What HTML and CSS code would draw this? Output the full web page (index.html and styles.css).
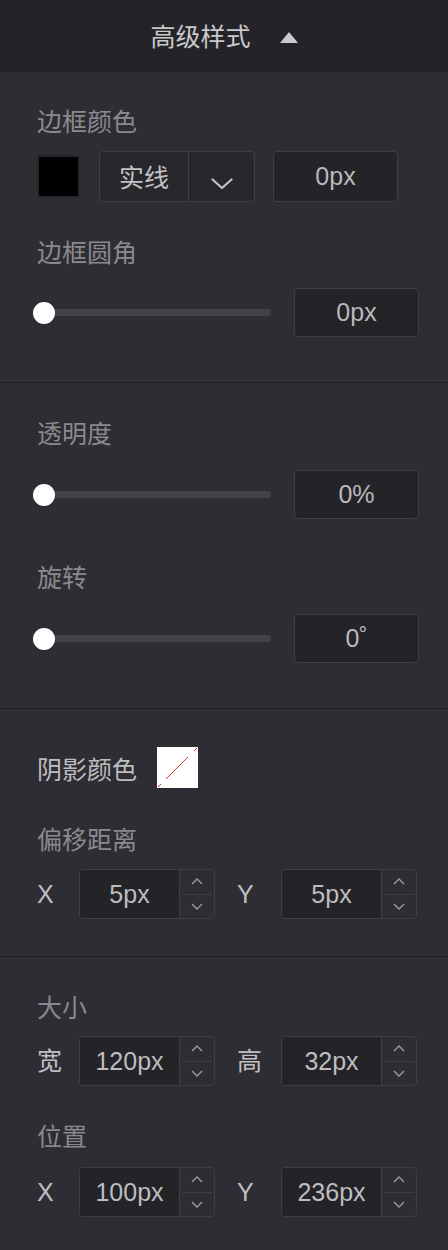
FILE: index.html
```html
<!DOCTYPE html>
<html lang="zh">
<head>
<meta charset="utf-8">
<title>高级样式</title>
<link rel="stylesheet" href="styles.css">
</head>
<body>
<div class="panel">
  <header class="head">
    <span class="title">高级样式</span>
    <span class="tri"></span>
  </header>

  <section class="sec sec1">
    <div class="label">边框颜色</div>
    <div class="row border-row">
      <div class="swatch swatch-black"></div>
      <div class="select">
        <span class="sel-text">实线</span>
        <span class="sel-arrow">
          <svg width="22" height="12" viewBox="0 0 22 12"><polyline points="1.5,1.5 11,10 20.5,1.5" fill="none" stroke="#c4c4c7" stroke-width="2.2" stroke-linecap="round" stroke-linejoin="round"/></svg>
        </span>
      </div>
      <div class="box box-border">0px</div>
    </div>
    <div class="label gap-label">边框圆角</div>
    <div class="row slider-row">
      <div class="slider"><div class="track"></div><div class="thumb"></div></div>
      <div class="box">0px</div>
    </div>
  </section>

  <section class="sec sec2">
    <div class="label">透明度</div>
    <div class="row slider-row">
      <div class="slider"><div class="track"></div><div class="thumb"></div></div>
      <div class="box">0%</div>
    </div>
    <div class="label gap-label2">旋转</div>
    <div class="row slider-row">
      <div class="slider"><div class="track"></div><div class="thumb"></div></div>
      <div class="box">0˚</div>
    </div>
  </section>

  <section class="sec sec3">
    <div class="row shadow-row">
      <span class="label-bright">阴影颜色</span>
      <div class="swatch-none">
        <svg width="41" height="41" viewBox="0 0 41 41">
          <line x1="1" y1="40" x2="4" y2="37" stroke="#e0322b" stroke-width="1"/>
          <line x1="9" y1="32" x2="31" y2="10" stroke="#e0322b" stroke-width="1"/>
          <line x1="37" y1="4" x2="40" y2="1" stroke="#e0322b" stroke-width="1"/>
        </svg>
      </div>
    </div>
    <div class="label gap-label3">偏移距离</div>
    <div class="pair-row">
      <span class="pl">X</span>
      <div class="spin"><span class="num">5px</span><span class="arrows"><span class="ar"><svg width="12" height="7" viewBox="0 0 12 7"><polyline points="1,6 6,1 11,6" fill="none" stroke="#9c9ca0" stroke-width="1.4"/></svg></span><span class="ar ar-d"><svg width="12" height="7" viewBox="0 0 12 7"><polyline points="1,1 6,6 11,1" fill="none" stroke="#9c9ca0" stroke-width="1.4"/></svg></span></span></div>
      <span class="pl pl2">Y</span>
      <div class="spin"><span class="num">5px</span><span class="arrows"><span class="ar"><svg width="12" height="7" viewBox="0 0 12 7"><polyline points="1,6 6,1 11,6" fill="none" stroke="#9c9ca0" stroke-width="1.4"/></svg></span><span class="ar ar-d"><svg width="12" height="7" viewBox="0 0 12 7"><polyline points="1,1 6,6 11,1" fill="none" stroke="#9c9ca0" stroke-width="1.4"/></svg></span></span></div>
    </div>
  </section>

  <section class="sec sec4">
    <div class="label">大小</div>
    <div class="pair-row pr-size">
      <span class="pl">宽</span>
      <div class="spin"><span class="num">120px</span><span class="arrows"><span class="ar"><svg width="12" height="7" viewBox="0 0 12 7"><polyline points="1,6 6,1 11,6" fill="none" stroke="#9c9ca0" stroke-width="1.4"/></svg></span><span class="ar ar-d"><svg width="12" height="7" viewBox="0 0 12 7"><polyline points="1,1 6,6 11,1" fill="none" stroke="#9c9ca0" stroke-width="1.4"/></svg></span></span></div>
      <span class="pl pl2">高</span>
      <div class="spin"><span class="num">32px</span><span class="arrows"><span class="ar"><svg width="12" height="7" viewBox="0 0 12 7"><polyline points="1,6 6,1 11,6" fill="none" stroke="#9c9ca0" stroke-width="1.4"/></svg></span><span class="ar ar-d"><svg width="12" height="7" viewBox="0 0 12 7"><polyline points="1,1 6,6 11,1" fill="none" stroke="#9c9ca0" stroke-width="1.4"/></svg></span></span></div>
    </div>
    <div class="label gap-label">位置</div>
    <div class="pair-row pr-pos">
      <span class="pl">X</span>
      <div class="spin"><span class="num">100px</span><span class="arrows"><span class="ar"><svg width="12" height="7" viewBox="0 0 12 7"><polyline points="1,6 6,1 11,6" fill="none" stroke="#9c9ca0" stroke-width="1.4"/></svg></span><span class="ar ar-d"><svg width="12" height="7" viewBox="0 0 12 7"><polyline points="1,1 6,6 11,1" fill="none" stroke="#9c9ca0" stroke-width="1.4"/></svg></span></span></div>
      <span class="pl pl2">Y</span>
      <div class="spin"><span class="num">236px</span><span class="arrows"><span class="ar"><svg width="12" height="7" viewBox="0 0 12 7"><polyline points="1,6 6,1 11,6" fill="none" stroke="#9c9ca0" stroke-width="1.4"/></svg></span><span class="ar ar-d"><svg width="12" height="7" viewBox="0 0 12 7"><polyline points="1,1 6,6 11,1" fill="none" stroke="#9c9ca0" stroke-width="1.4"/></svg></span></span></div>
    </div>
  </section>
</div>
</body>
</html>
```

FILE: styles.css
```css
* { box-sizing: border-box; }
html, body {
  margin: 0;
  padding: 0;
  background: #2e2d33;
}
body {
  font-family: "Liberation Sans", "Noto Sans CJK SC", sans-serif;
  font-size: 25px;
  color: #bcbcbf;
}
.panel {
  width: 448px;
  min-height: 1250px;
  background: #2e2d33;
}
.head {
  height: 72px;
  background: #242428;
  display: flex;
  align-items: center;
  justify-content: center;
}
.title {
  font-family: "Noto Sans CJK SC", sans-serif;
  font-size: 25px;
  line-height: 32px;
  color: #c9c9cc;
  margin-top: -2px;
}
.tri {
  width: 0;
  height: 0;
  border-left: 9px solid transparent;
  border-right: 9px solid transparent;
  border-bottom: 11px solid #cacacd;
  margin-left: 29px;
  margin-top: 2px;
}
.sec {
  padding: 0 29px 0 37px;
  border-bottom: 1px solid #1e1d21;
}
.sec4 { border-bottom: none; }
.sec1 { padding-top: 32px; padding-bottom: 45px; }
.sec2 { padding-top: 33px; padding-bottom: 45px; }
.sec3 { padding-top: 38px; padding-bottom: 37px; }
.sec4 { padding-top: 33px; }

.label {
  font-family: "Noto Sans CJK SC", sans-serif;
  font-size: 25px;
  line-height: 32px;
  color: #8a898e;
}
.label-bright {
  font-family: "Noto Sans CJK SC", sans-serif;
  font-size: 25px;
  line-height: 32px;
  color: #bdbdc0;
}
.gap-label { margin-top: 33px; }
.gap-label2 { margin-top: 41px; }
.gap-label3 { margin-top: 34px; }

.row { display: flex; align-items: center; }

.border-row { margin-top: 15px; height: 51px; }
.swatch {
  width: 43px;
  height: 43px;
  border: 2px solid #27262b;
}
.swatch-black { background: #000; }
.select {
  margin-left: 19px;
  width: 156px;
  height: 51px;
  border: 1px solid #3f3e44;
  border-radius: 4px;
  background: #28272c;
  display: flex;
}
.sel-text {
  width: 89px;
  border-right: 1px solid #3f3e44;
  display: flex;
  align-items: center;
  justify-content: center;
  font-family: "Noto Sans CJK SC", sans-serif;
  color: #c2c2c5;
  padding-bottom: 2px;
}
.sel-arrow {
  flex: 1;
  display: flex;
  justify-content: center;
  padding-top: 26px;
}
.sel-arrow svg { display: block; }
.box {
  width: 125px;
  height: 49px;
  border: 1px solid #3f3e44;
  border-radius: 4px;
  background: #242328;
  display: flex;
  align-items: center;
  justify-content: center;
  color: #b9b9bc;
}
.box-border { margin-left: 18px; height: 51px; }

.slider-row {
  margin-top: 22px;
  margin-left: -4px;
  width: 386px;
  justify-content: space-between;
}
.sec1 .slider-row { margin-top: 21px; }
.slider {
  position: relative;
  width: 238px;
  height: 22px;
  display: flex;
  align-items: center;
}
.track {
  margin-left: 11px;
  flex: 1;
  height: 7px;
  border-radius: 4px;
  background: #424147;
}
.thumb {
  position: absolute;
  left: 0;
  top: 0;
  width: 22px;
  height: 22px;
  border-radius: 50%;
  background: #fff;
}

.shadow-row { height: 41px; }
.swatch-none {
  margin-left: 20px;
  width: 41px;
  height: 41px;
  background: #fff;
}
.swatch-none svg { display: block; }

.pair-row {
  display: grid;
  grid-template-columns: 42px 136px 66px 136px;
  align-items: center;
  margin-top: 15px;
  height: 50px;
}
.pr-size { margin-top: 14px; }
.pr-pos { margin-top: 16px; }
.pl {
  color: #bfbfc2;
  font-size: 25px;
  line-height: 32px;
}
.pl2 { padding-left: 22px; }
.spin {
  height: 50px;
  border: 1px solid #3f3e44;
  border-radius: 4px;
  display: flex;
  overflow: hidden;
}
.num {
  width: 100px;
  background: #242328;
  border-right: 1px solid #3f3e44;
  display: flex;
  align-items: center;
  justify-content: center;
  color: #bdbdc0;
}
.arrows {
  flex: 1;
  display: flex;
  flex-direction: column;
  padding: 0 2px;
}
.ar {
  flex: 1;
  display: flex;
  align-items: center;
  justify-content: center;
}
.ar:first-child { border-bottom: 1px solid #3f3e44; }
.ar svg { display: block; }
```
